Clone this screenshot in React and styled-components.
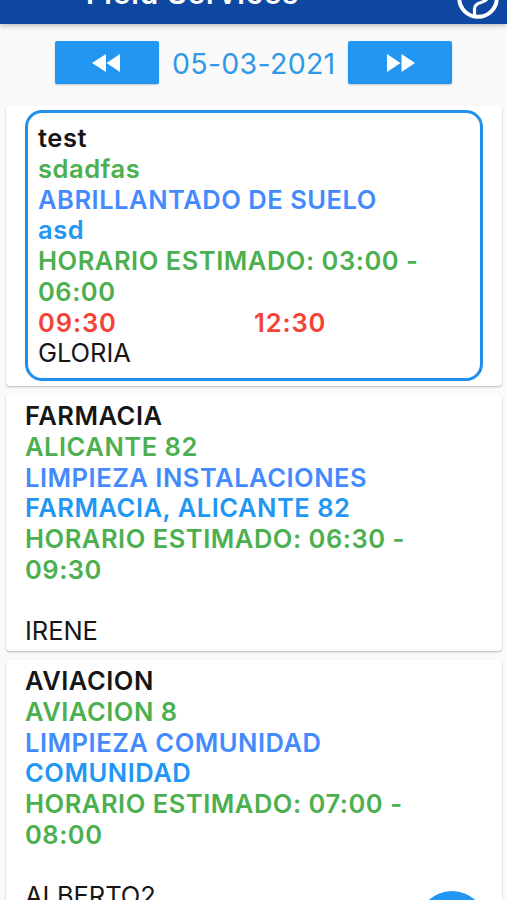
import React from 'react';
import styled, { createGlobalStyle } from 'styled-components';

const GlobalStyle = createGlobalStyle`
  * {
    box-sizing: border-box;
  }
  body {
    margin: 0;
    background: #fafafa;
    font-family: Inter, Roboto, sans-serif;
  }
`;

const Screen = styled.div`
  position: relative;
  display: flex;
  flex-direction: column;
  height: 900px;
  overflow: hidden;
`;

const AppBar = styled.header`
  display: flex;
  align-items: flex-end;
  justify-content: space-between;
  flex-shrink: 0;
  height: 24px;
  padding: 0 8px 0 86px;
  background: #0d47a1;
  box-shadow: 0 1px 6px rgba(0, 0, 0, 0.3);
`;

const Title = styled.h1`
  margin: 0;
  padding-bottom: 13px;
  color: #fff;
  font-size: 29px;
  font-weight: 600;
  line-height: 35px;
  letter-spacing: 1.15px;
  white-space: nowrap;
`;

const BallIcon = styled.svg`
  width: 42px;
  height: 42px;
  margin-bottom: 5.5px;
  flex-shrink: 0;
`;

const DateBar = styled.div`
  display: flex;
  align-items: center;
  justify-content: space-between;
  flex-shrink: 0;
  height: 43px;
  margin: 17px 54.5px 22px 55px;
`;

const DateButton = styled.button`
  display: flex;
  align-items: center;
  justify-content: center;
  width: 104px;
  height: 43px;
  padding: ${({ $next }) => ($next ? '0 0 0 2px' : '0 2px 0 0')};
  border: 0;
  border-radius: 2px;
  background: #2196f3;
  box-shadow: 0 1px 2px rgba(0, 0, 0, 0.22);
  cursor: pointer;
`;

const DateText = styled.span`
  padding-top: 1px;
  color: #2f98e8;
  font-size: 28.5px;
  letter-spacing: 0.3px;
  white-space: nowrap;
`;

const Card = styled.article`
  flex-shrink: 0;
  margin: 0 5px 9px 6px;
  padding: ${({ $selected }) => ($selected ? '4px 19px 5px' : '6px 19px 4px')};
  border-radius: 4px;
  background: #fff;
  box-shadow: 0 1px 2px rgba(0, 0, 0, 0.28);
`;

const Content = styled.div`
  padding: ${({ $selected }) => ($selected ? '10px 10px 9px' : '0')};
  border: ${({ $selected }) => ($selected ? '3px solid #2090ec' : '0')};
  border-radius: 17px;
`;

const Line = styled.p`
  margin: 0;
  min-height: 30.75px;
  color: ${({ $color }) => $color || '#161616'};
  font-size: 25.5px;
  font-weight: ${({ $regular }) => ($regular ? 400 : 600)};
  line-height: 30.75px;
  letter-spacing: ${({ $regular }) => ($regular ? '-0.05px' : '0.53px')};
`;

const Times = styled.div`
  display: grid;
  grid-template-columns: 1fr 1fr;
  min-height: 30.75px;
`;

const Time = styled(Line)`
  letter-spacing: 0.9px;
`;

const Fab = styled.button`
  position: absolute;
  left: 417px;
  top: 890.5px;
  width: 70px;
  height: 70px;
  padding: 0;
  border: 0;
  border-radius: 50%;
  background: #2196f3;
`;

const GREEN = '#4caf50';
const INDIGO = '#448aff';
const BLUE = '#2196f3';
const RED = '#f44336';

const services = [
  {
    client: 'test',
    address: 'sdadfas',
    job: 'ABRILLANTADO DE SUELO',
    place: 'asd',
    schedule: '03:00 - 06:00',
    start: '09:30',
    end: '12:30',
    worker: 'GLORIA',
    selected: true,
  },
  {
    client: 'FARMACIA',
    address: 'ALICANTE 82',
    job: 'LIMPIEZA INSTALACIONES',
    place: 'FARMACIA, ALICANTE 82',
    schedule: '06:30 - 09:30',
    worker: 'IRENE',
  },
  {
    client: 'AVIACION',
    address: 'AVIACION 8',
    job: 'LIMPIEZA COMUNIDAD',
    place: 'COMUNIDAD',
    schedule: '07:00 - 08:00',
    worker: 'ALBERTO2',
  },
];

function Service({ service }) {
  return (
    <Card $selected={service.selected}>
      <Content $selected={service.selected}>
        <Line>{service.client}</Line>
        <Line $color={GREEN}>{service.address}</Line>
        <Line $color={INDIGO}>{service.job}</Line>
        <Line $color={BLUE}>{service.place}</Line>
        <Line $color={GREEN}>{`HORARIO ESTIMADO: ${service.schedule}`}</Line>
        <Times>
          <Time $color={RED}>{service.start}</Time>
          <Time $color={RED}>{service.end}</Time>
        </Times>
        <Line $regular>{service.worker}</Line>
      </Content>
    </Card>
  );
}

function App() {
  return (
    <>
      <GlobalStyle />
      <Screen>
        <AppBar>
          <Title>Field Services</Title>
          <BallIcon viewBox="0 0 42 42" fill="none" stroke="#fff" strokeWidth="4">
            <circle cx="21" cy="21" r="18.8" />
            <path
              d="M17.500 39V32C17.500 28 20 26.500 24 25.500C28 24.500 30 23 31 20"
              strokeWidth="3.2"
            />
          </BallIcon>
        </AppBar>
        <DateBar>
          <DateButton aria-label="Anterior">
            <svg width="28" height="20" viewBox="0 0 28 20" fill="#fff">
              <path d="M14 1v18L0 10zM28 1v18L14.500 10z" />
            </svg>
          </DateButton>
          <DateText>05-03-2021</DateText>
          <DateButton $next aria-label="Siguiente">
            <svg width="28" height="20" viewBox="0 0 28 20" fill="#fff">
              <path d="M0 1v18l13.500-9zM14.500 1v18l13.500-9z" />
            </svg>
          </DateButton>
        </DateBar>
        {services.map((service) => (
          <Service key={service.client} service={service} />
        ))}
        <Fab aria-label="Nuevo" />
      </Screen>
    </>
  );
}

export default App;
